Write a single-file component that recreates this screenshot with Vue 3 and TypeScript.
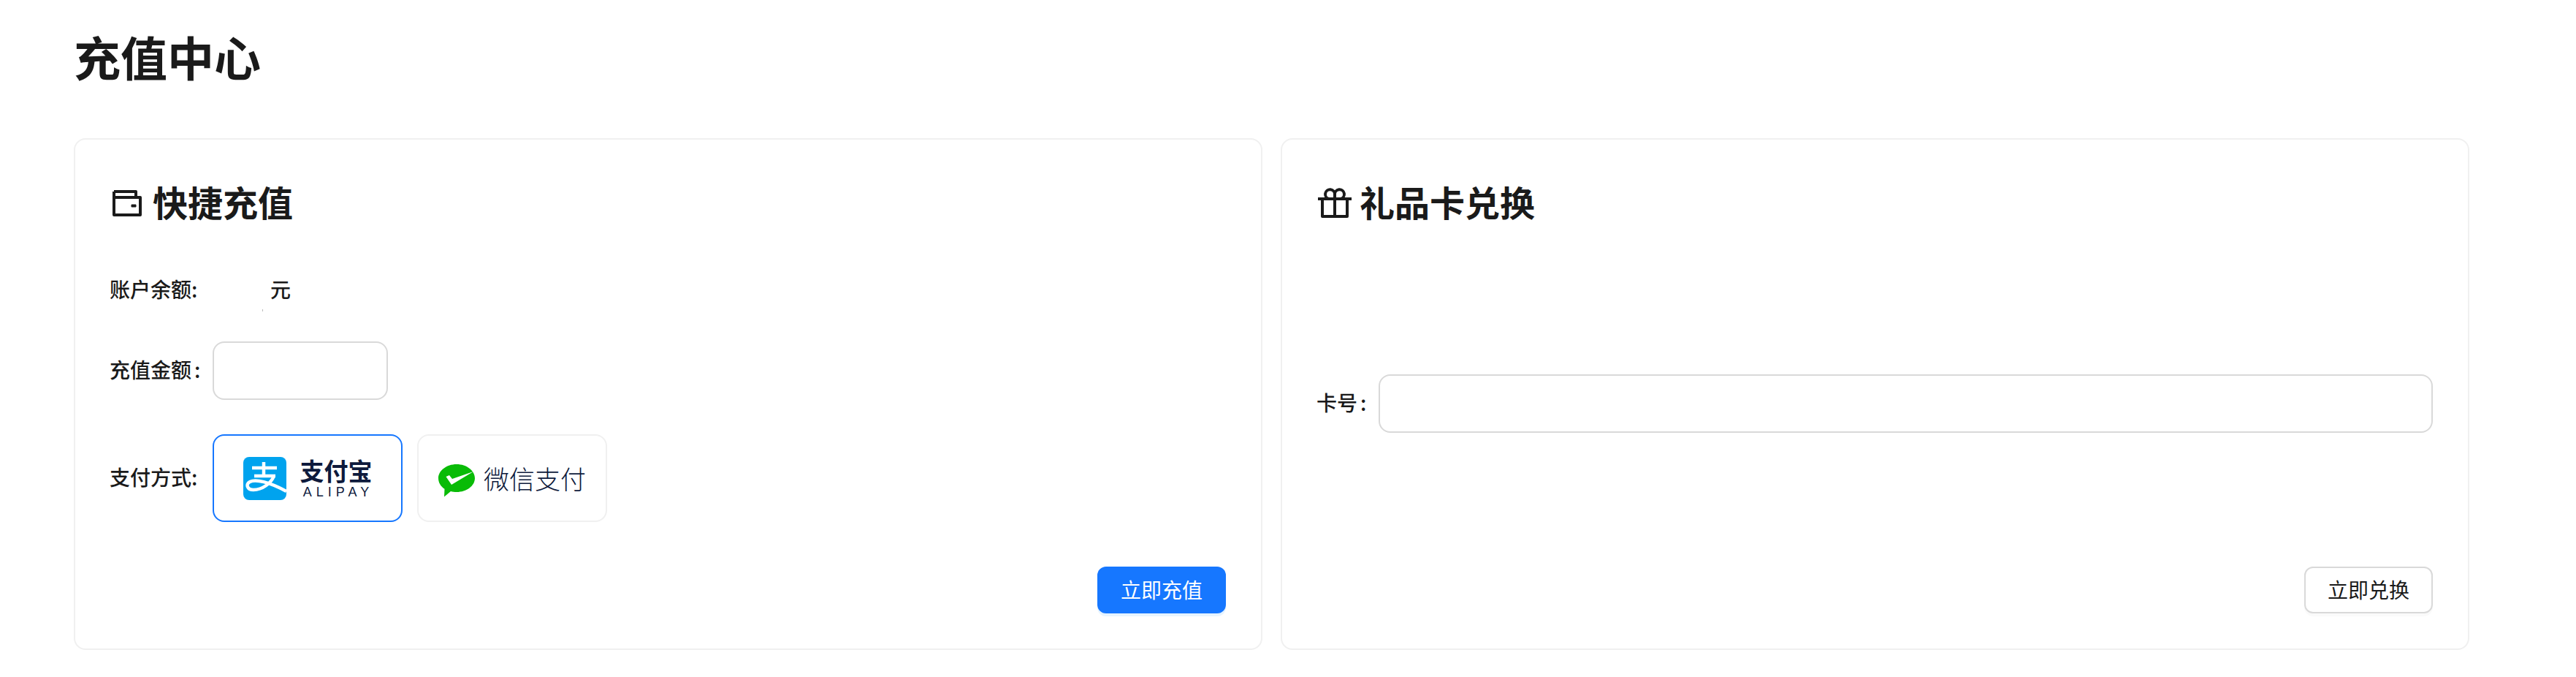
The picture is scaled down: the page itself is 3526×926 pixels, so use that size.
<template>
  <div class="recharge-page">
    <h1 class="page-title">充值中心</h1>
    <div class="card-grid">
      <section class="card">
        <h2 class="card-title">
          <svg class="title-icon" width="48" height="48" viewBox="0 0 48 48" fill="none" stroke="currentColor" stroke-width="4" stroke-linejoin="round">
            <path d="M5 9h30v8M5 9v32h36V17H5"/>
            <rect x="29" y="27" width="6" height="3" fill="currentColor" stroke-width="1"/>
          </svg>
          <span class="title-text">快捷充值</span>
        </h2>
        <div class="balance-row">
          <span class="plain-label">账户余额:</span>
          <span class="balance-value"><i class="speck"></i></span>
          <span class="row-text">元</span>
        </div>
        <div class="amount-row">
          <label class="form-label">充值金额</label>
          <input v-model="amount" class="text-input amount-input" type="text" />
        </div>
        <div class="pay-row">
          <span class="plain-label">支付方式:</span>
          <div class="pay-options">
            <button class="pay-option" :class="{ active: payType === 'alipay' }" @click="payType = 'alipay'">
              <svg class="alipay-mark" width="59" height="59" viewBox="0 0 59 59">
                <rect width="59" height="59" rx="8" fill="#00a3ee"/>
                <g fill="none" stroke="#fff" stroke-width="4.500">
                  <path d="M12 15h34M28 7v19M15 26h29"/>
                  <path d="M42 26C38 36 26 45 14 45C5 45 3 37 9 34C17 30 35 34 59 47"/>
                </g>
              </svg>
              <span class="alipay-text">
                <span class="alipay-cn">支付宝</span>
                <span class="alipay-en">ALIPAY</span>
              </span>
            </button>
            <button class="pay-option" :class="{ active: payType === 'wechat' }" @click="payType = 'wechat'">
              <svg class="wechat-mark" width="50" height="45" viewBox="0 0 50 45">
                <path d="M25 0C38.800 0 50 8.700 50 19C50 29.500 38.800 38 25 38C22 38 19.500 37.600 17 36.900L8 44.500L8.500 33.800C3.200 30.300 0 25 0 19C0 8.700 11.200 0 25 0Z" fill="#09bb07"/>
                <path d="M10.500 17L15 15L19 20L48 10L18 28Z" fill="#fff"/>
              </svg>
              <span class="wechat-text">微信支付</span>
            </button>
          </div>
        </div>
        <div class="card-footer">
          <button class="btn btn-primary">立即充值</button>
        </div>
      </section>

      <section class="card">
        <h2 class="card-title">
          <svg class="title-icon" width="48" height="48" viewBox="0 0 48 48" fill="none" stroke="currentColor" stroke-width="4" stroke-linejoin="round">
            <path d="M1 19h46M7 19v24h34V19M24 19v24"/>
            <path d="M16 19a6.500 6.500 0 1 1 8-6v6M32 19a6.500 6.500 0 1 0-8-6"/>
          </svg>
          <span class="title-text">礼品卡兑换</span>
        </h2>
        <div class="redeem-body">
          <div class="redeem-row">
            <label class="form-label">卡号</label>
            <input v-model="cardNo" class="text-input" type="text" />
          </div>
        </div>
        <div class="card-footer">
          <button class="btn btn-default">立即兑换</button>
        </div>
      </section>
    </div>
  </div>
</template>

<script setup lang="ts">
import { ref } from 'vue'

const amount = ref('')
const cardNo = ref('')
const payType = ref<'alipay' | 'wechat'>('alipay')
</script>

<style>
body {
  background: #fff;
}
</style>

<style scoped>
.recharge-page {
  padding: 31px 146px 37px 101px;
  font-family: "Noto Sans CJK SC", "Noto Sans", sans-serif;
  font-size: 28px;
  color: #1a1a1a;
}

.page-title {
  margin: 0 0 68px;
  font-size: 64px;
  line-height: 90px;
  font-weight: 700;
}

.card-grid {
  display: grid;
  grid-template-columns: 1fr 1fr;
  gap: 25px;
}

.card {
  display: flex;
  flex-direction: column;
  height: 700px;
  box-sizing: border-box;
  padding: 48px;
  border: 2px solid #f0f0f0;
  border-radius: 16px;
  background: #fff;
}

.card-title {
  display: flex;
  align-items: center;
  gap: 10px;
  margin: 0;
  height: 75px;
  font-size: 48px;
  font-weight: 600;
}

.title-icon {
  flex: none;
}

.title-text {
  padding-bottom: 4px;
}

.balance-row {
  display: flex;
  align-items: center;
  height: 64px;
  margin-top: 51px;
  font-weight: 500;
}

.plain-label {
  width: 141px;
  flex: none;
  margin-left: -1px;
  padding-bottom: 4px;
  font-weight: 500;
  white-space: nowrap;
}

.row-text {
  padding-bottom: 4px;
}

.balance-value {
  display: flex;
  align-items: flex-end;
  width: 79px;
  height: 32px;
  padding-left: 68px;
  box-sizing: border-box;
}

.speck {
  display: block;
  width: 1px;
  height: 3px;
  margin-bottom: -13px;
  background: #bbb;
}

.amount-row {
  display: flex;
  align-items: center;
  margin-top: 38px;
}

.form-label {
  flex: none;
  margin-left: -1px;
  padding-bottom: 4px;
  font-weight: 500;
  white-space: nowrap;
}

.form-label::after {
  content: ":";
  margin: 0 17px 0 4px;
}

.text-input {
  flex: 1;
  min-width: 0;
  height: 80px;
  box-sizing: border-box;
  padding: 8px 22px;
  border: 2px solid #d9d9d9;
  border-radius: 16px;
  outline: none;
  font: inherit;
  background: #fff;
}

.amount-input {
  flex: none;
  width: 240px;
}

.pay-row {
  display: flex;
  align-items: center;
  margin-top: 47px;
}

.pay-options {
  display: flex;
  gap: 20px;
}

.pay-option {
  display: flex;
  align-items: center;
  justify-content: center;
  width: 260px;
  height: 120px;
  padding: 0;
  border: 2px solid #f0f0f0;
  border-radius: 16px;
  background: #fff;
  font-family: inherit;
  cursor: pointer;
}

.pay-option.active {
  border-color: #1677ff;
}

.alipay-mark {
  flex: none;
  margin-right: 19px;
}

.alipay-text {
  display: flex;
  flex-direction: column;
  align-items: center;
  color: #0e1a3c;
}

.alipay-cn {
  font-size: 33px;
  line-height: 36px;
  font-weight: 700;
}

.alipay-en {
  margin-top: 2px;
  margin-right: -6px;
  font-family: "Liberation Sans", sans-serif;
  font-size: 18px;
  line-height: 20px;
  letter-spacing: 6px;
}

.wechat-mark {
  flex: none;
  margin: 6px 12px 0 0;
}

.wechat-text {
  padding-bottom: 2px;
  font-size: 35px;
  font-weight: 300;
  color: #0e1a3c;
}

.card-footer {
  display: flex;
  justify-content: flex-end;
  margin-top: auto;
}

.btn {
  width: 176px;
  height: 64px;
  box-sizing: border-box;
  padding: 0 0 3px;
  border: 2px solid transparent;
  border-radius: 12px;
  font: inherit;
  cursor: pointer;
}

.btn-primary {
  background: #1677ff;
  color: #fff;
  box-shadow: 0 4px 0 rgba(5, 145, 255, 0.1);
}

.btn-default {
  background: #fff;
  border-color: #d9d9d9;
  color: #1a1a1a;
  box-shadow: 0 4px 0 rgba(0, 0, 0, 0.02);
}

.redeem-body {
  flex: 1;
  display: flex;
  align-items: center;
  padding-top: 15px;
}

.redeem-row {
  display: flex;
  align-items: center;
  width: 100%;
}
</style>
